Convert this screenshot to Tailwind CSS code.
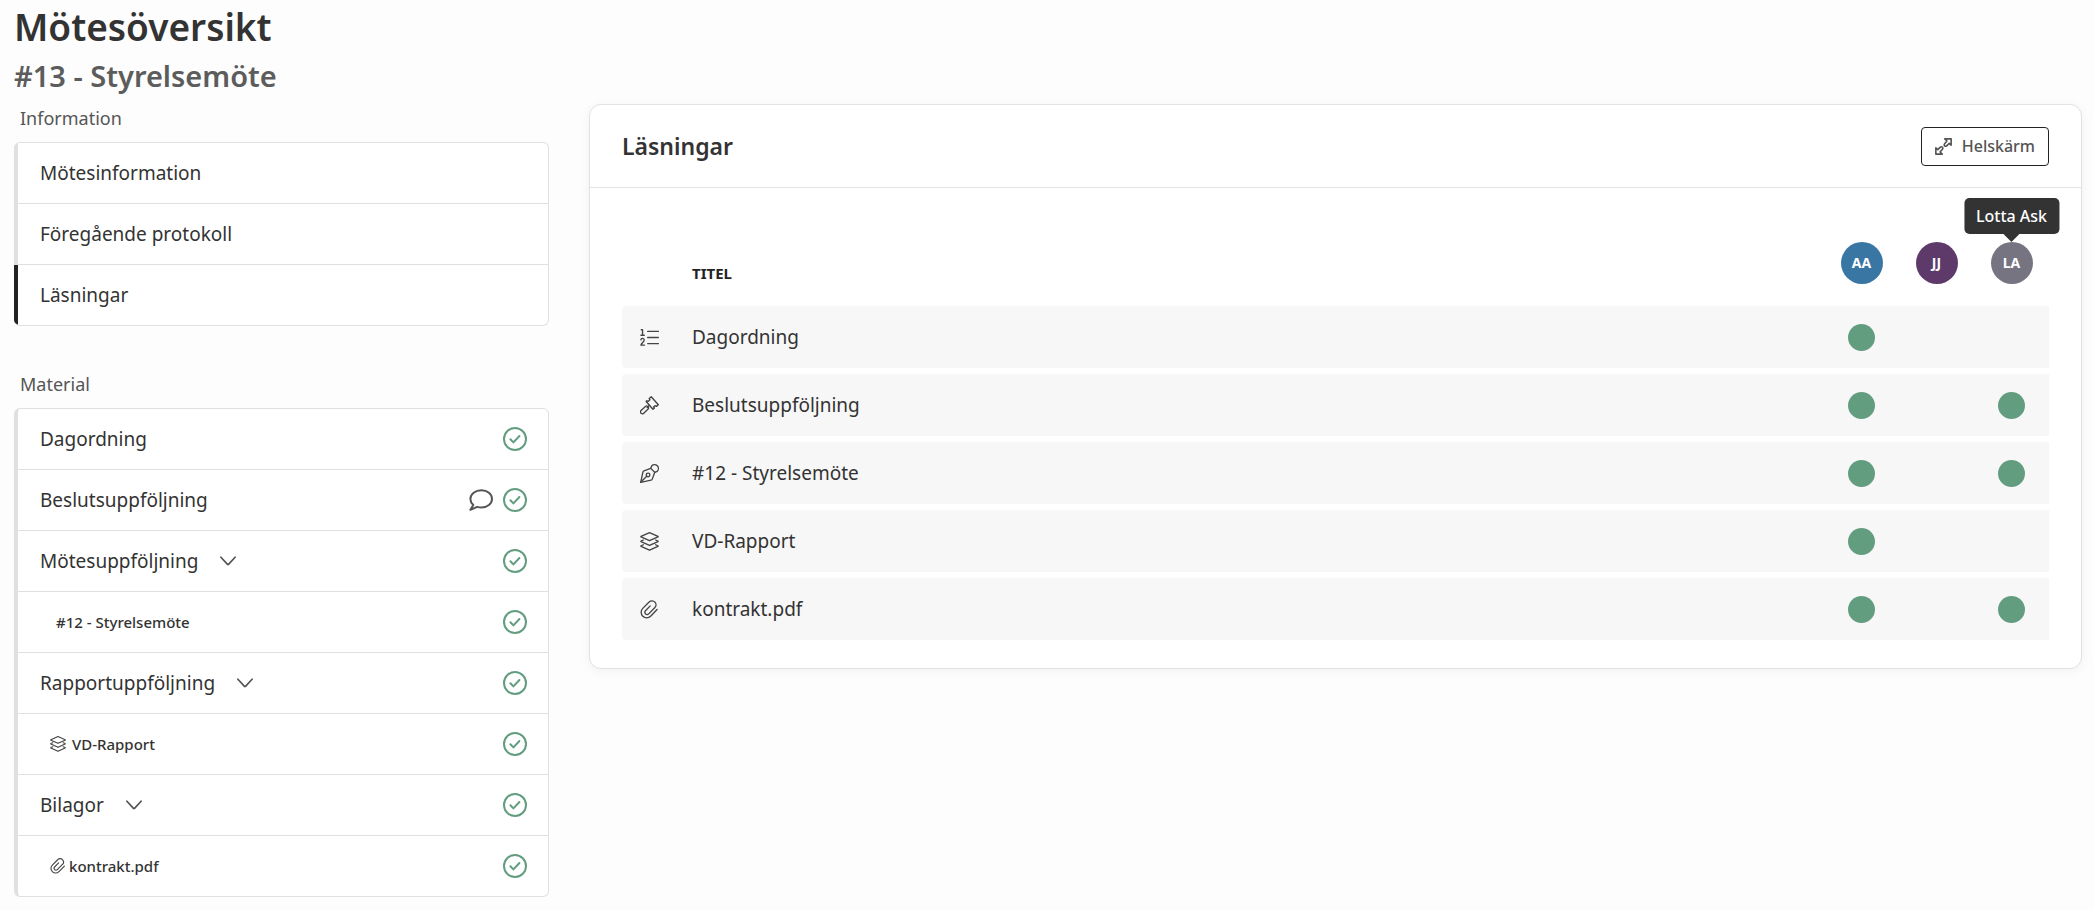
<!DOCTYPE html>
<html lang="sv">
<head>
<meta charset="utf-8">
<meta name="viewport" content="width=device-width, initial-scale=1">
<title>Mötesöversikt</title>
<script src="https://cdn.jsdelivr.net/npm/@tailwindcss/browser@4"></script>
</head>
<body class="min-h-screen bg-[#fdfdfd] font-['Noto_Sans',sans-serif] text-[19px] leading-7 font-normal text-[#333333]">

<svg class="hidden" aria-hidden="true">
  <symbol id="check" viewBox="0 0 24 24" fill="none" stroke="currentColor" stroke-width="2" stroke-linecap="round" stroke-linejoin="round">
    <circle cx="12" cy="12" r="11"/><path d="M7.400 12.200l3 3.200 6-6.400"/>
  </symbol>
  <symbol id="comment" viewBox="0 0 24 24" fill="none" stroke="currentColor" stroke-width="2" stroke-linecap="round" stroke-linejoin="round">
    <path d="M12.400 2.200C6.400 2.200 1.400 6 1.400 10.900c0 2.300 1.100 4.400 2.900 6L1.400 21.800l6.800-2.900c1.300.4 2.700.6 4.200.6 6 0 10.600-3.900 10.600-8.600s-4.600-8.700-10.600-8.700z"/>
  </symbol>
  <symbol id="chevron" viewBox="0 0 16 16" fill="none" stroke="currentColor" stroke-width="1.700" stroke-linecap="round" stroke-linejoin="round">
    <path d="M.9 4.200l6.600 7.200a.7.7 0 0 0 1 0l6.600-7.200"/>
  </symbol>
  <symbol id="layers" viewBox="0 0 24 24" fill="none" stroke="currentColor" stroke-width="1.700" stroke-linecap="round" stroke-linejoin="round">
    <path d="M12 .9L1.300 5.600a.4.4 0 0 0 0 .7L12 11l10.700-4.700a.4.4 0 0 0 0-.7z"/>
    <path d="M4.200 10.100l-2.900 1.300a.4.4 0 0 0 0 .7L12 17l10.700-4.900a.4.4 0 0 0 0-.7l-2.900-1.300"/>
    <path d="M4.200 16.100l-2.900 1.300a.4.4 0 0 0 0 .7L12 23l10.700-4.900a.4.4 0 0 0 0-.7l-2.900-1.300"/>
  </symbol>
  <symbol id="clip" viewBox="0 0 24 24" fill="none" stroke="currentColor" stroke-width="1.700" stroke-linecap="round" stroke-linejoin="round">
    <path d="M21.600 12.100l-8.200 8.400a7 7 0 0 1-9.900 0 7 7 0 0 1 0-9.900l8-8a5 5 0 0 1 7.400.100 5 5 0 0 1-.3 7l-7.600 7.800a2.800 2.800 0 0 1-4.100 0 2.800 2.800 0 0 1 0-4l6-6.100"/>
  </symbol>
  <symbol id="list" viewBox="0 0 24 24" fill="none" stroke="currentColor" stroke-width="1.700" stroke-linecap="round" stroke-linejoin="round">
    <path d="M9.700 4.300h13.500M9.700 12h13.500M9.700 19.700h13.500"/>
    <path d="M1.600 2.200h1.600v7M1.200 9.200h4.200M1.200 15a2 2 0 0 1 4 .4c0 1.800-2.600 3-4.100 6.300h4.500"/>
  </symbol>
  <symbol id="gavel" viewBox="0 0 24 24" fill="none" stroke="currentColor" stroke-width="1.700" stroke-linecap="round" stroke-linejoin="round">
    <path d="M14.200.9l-2.600 2.200 1 1.700-2.300 2-1.700-.8M8.600 6l-.8.9 8.500 9.900 1.900-1.600M14.200.9l8.900 10.200-2.300 2-1.700-.9-2 1.800 1.100 1.200"/>
    <path d="M12 11.800L9 14.500"/>
    <path d="M7.200 12.900a1.500 1.500 0 0 1 2.100.1l1.100 1.200a1.500 1.500 0 0 1-.1 2.100l-5.600 5.400a2.400 2.400 0 0 1-3.400-3.500z"/>
  </symbol>
  <symbol id="pen" viewBox="0 0 24 24" fill="none" stroke="currentColor" stroke-width="1.700" stroke-linecap="round" stroke-linejoin="round">
    <path d="M.9 23.100l2.800-13a2 2 0 0 1 1.300-1.500l8.600-3.100 5 5-3.100 8.600a2 2 0 0 1-1.500 1.300z"/>
    <path d="M13.600 5.500l1.300-3.200a4.600 4.600 0 0 1 6.900 6.900l-3.200 1.300M.9 23.100l7.600-7.600"/>
    <circle cx="10.200" cy="13.800" r="2.300"/>
  </symbol>
  <symbol id="expand" viewBox="0 0 24 24" fill="none" stroke="currentColor" stroke-width="2.300" stroke-linecap="round" stroke-linejoin="round">
    <path d="M13.800 1.200h9v9l-2.700-2.700-3.600 3.600a2 2 0 0 1-2.900 0 2 2 0 0 1 0-2.900l3.200-3.900z"/>
    <path d="M10.200 22.800h-9v-9l2.700 2.700 3.600-3.600a2 2 0 0 1 2.900 0 2 2 0 0 1 0 2.900l-3.200 3.900z"/>
  </symbol>
</svg>

<div class="pl-3.5 pr-3 pb-3">
  <header>
    <h1 class="pt-1 text-[37px] leading-[46px] font-semibold">Mötesöversikt</h1>
    <p class="text-[29px] leading-[52px] font-semibold text-[#5c5c5c]">#13 - Styrelsemöte</p>
  </header>

  <div class="grid grid-cols-[535fr_1493fr] items-start gap-x-10 pt-0.5">
    <nav aria-label="Möte">
      <h2 class="mb-[9px] pl-1.5 text-lg leading-[29px] text-[#555555]">Information</h2>
      <ul class="overflow-hidden rounded-md border-y border-r border-[#e0e0e0] bg-white divide-y divide-[#e0e0e0]">
        <li><a href="#" class="flex h-15 items-center border-l-4 border-[#e0e0e0] px-[22px]">Mötesinformation</a></li>
        <li><a href="#" class="flex h-15 items-center border-l-4 border-[#e0e0e0] px-[22px]">Föregående protokoll</a></li>
        <li><a href="#" aria-current="page" class="flex h-15 items-center border-l-4 border-[#222222] px-[22px]">Läsningar</a></li>
      </ul>

      <h2 class="mt-11 mb-[9px] pl-1.5 text-lg leading-[29px] text-[#555555]">Material</h2>
      <ul class="overflow-hidden rounded-md border-y border-r border-l-4 border-[#e0e0e0] bg-white divide-y divide-[#e0e0e0]">
        <li class="flex items-center pr-[21px] pl-[22px]">
          <a href="#" class="flex h-15 grow items-center">Dagordning</a>
          <svg class="size-6 text-[#639d80]" role="img" aria-label="Läst"><use href="#check"/></svg>
        </li>
        <li class="flex items-center gap-2.5 pr-[21px] pl-[22px]">
          <a href="#" class="flex h-15 grow items-center">Beslutsuppföljning</a>
          <svg class="size-6 text-[#555555]" role="img" aria-label="Kommentar"><use href="#comment"/></svg>
          <svg class="size-6 text-[#639d80]" role="img" aria-label="Läst"><use href="#check"/></svg>
        </li>
        <li class="flex items-center pr-[21px] pl-[22px]">
          <button type="button" aria-expanded="true" class="flex h-15 grow items-center gap-[22px] text-left">Mötesuppföljning<svg class="size-4 text-[#555555]"><use href="#chevron"/></svg></button>
          <svg class="size-6 text-[#639d80]" role="img" aria-label="Läst"><use href="#check"/></svg>
        </li>
        <li class="flex items-center pr-[21px] pl-[38px] text-[15px] font-medium">
          <a href="#" class="flex h-15 grow items-center">#12 - Styrelsemöte</a>
          <svg class="size-6 text-[#639d80]" role="img" aria-label="Läst"><use href="#check"/></svg>
        </li>
        <li class="flex items-center pr-[21px] pl-[22px]">
          <button type="button" aria-expanded="true" class="flex h-15 grow items-center gap-[22px] text-left">Rapportuppföljning<svg class="size-4 text-[#555555]"><use href="#chevron"/></svg></button>
          <svg class="size-6 text-[#639d80]" role="img" aria-label="Läst"><use href="#check"/></svg>
        </li>
        <li class="flex items-center pr-[21px] pl-8 text-[15px] font-medium">
          <a href="#" class="flex h-15 grow items-center gap-1.5"><svg class="size-4 text-[#444444]"><use href="#layers"/></svg>VD-Rapport</a>
          <svg class="size-6 text-[#639d80]" role="img" aria-label="Läst"><use href="#check"/></svg>
        </li>
        <li class="flex items-center pr-[21px] pl-[22px]">
          <button type="button" aria-expanded="true" class="flex h-15 grow items-center gap-[22px] text-left">Bilagor<svg class="size-4 text-[#555555]"><use href="#chevron"/></svg></button>
          <svg class="size-6 text-[#639d80]" role="img" aria-label="Läst"><use href="#check"/></svg>
        </li>
        <li class="flex items-center pr-[21px] pl-8 text-[15px] font-medium">
          <a href="#" class="flex h-15 grow items-center gap-[3px]"><svg class="size-4 text-[#444444]"><use href="#clip"/></svg>kontrakt.pdf</a>
          <svg class="size-6 text-[#639d80]" role="img" aria-label="Läst"><use href="#check"/></svg>
        </li>
      </ul>
    </nav>

    <main class="rounded-xl border border-[#e2e2e2] bg-white shadow-[0_2px_12px_rgba(0,0,0,0.05)]">
      <div class="flex h-[83px] items-center justify-between border-b border-[#e2e2e2] px-8">
        <h2 class="text-[23px] font-semibold">Läsningar</h2>
        <button type="button" class="flex h-[39px] items-center gap-2.5 rounded border border-[#222222] px-[13px] text-base font-medium text-[#555555]"><svg class="size-[17px]"><use href="#expand"/></svg>Helskärm</button>
      </div>

      <div class="px-8 pt-8 pb-[22px]">
        <table class="w-full table-fixed border-separate border-spacing-x-0 border-spacing-y-1.5">
          <colgroup><col class="w-[70px]"><col><col class="w-[75px]"><col class="w-[75px]"><col class="w-[75px]"></colgroup>
          <thead>
            <tr>
              <td></td>
              <th scope="col" class="py-4 text-left align-bottom text-[15px] leading-[22px] font-bold text-[#222222]">TITEL</th>
              <th scope="col" class="py-4"><span class="mx-auto flex size-[42px] items-center justify-center rounded-full bg-[#3a76a3] text-sm font-bold text-white">AA</span></th>
              <th scope="col" class="py-4"><span class="mx-auto flex size-[42px] items-center justify-center rounded-full bg-[#5d3a69] text-sm font-bold text-white">JJ</span></th>
              <th scope="col" class="py-4">
                <span class="relative mx-auto flex size-[42px] items-center justify-center rounded-full bg-[#777482] text-sm font-bold text-white">LA
                  <span role="tooltip" class="absolute bottom-full left-1/2 flex -translate-x-1/2 flex-col items-center">
                    <span class="flex h-9 items-center rounded-[5px] bg-[#333333] px-3 text-base font-medium whitespace-nowrap">Lotta Ask</span>
                    <svg class="h-2 w-4 text-[#333333]" viewBox="0 0 16 8"><path fill="currentColor" d="M0 0h16L8 8z"/></svg>
                  </span>
                </span>
              </th>
            </tr>
          </thead>
          <tbody>
            <tr class="h-[62px] bg-[#f7f7f7]">
              <td class="rounded-l-sm pl-[18px]"><svg class="size-[19px] text-[#444444]"><use href="#list"/></svg></td>
              <td>Dagordning</td>
              <td><span class="mx-auto block size-[27px] rounded-full bg-[#639d80]" role="img" aria-label="Läst"></span></td>
              <td></td>
              <td></td>
            </tr>
            <tr class="h-[62px] bg-[#f7f7f7]">
              <td class="rounded-l-sm pl-[18px]"><svg class="size-[19px] text-[#444444]"><use href="#gavel"/></svg></td>
              <td>Beslutsuppföljning</td>
              <td><span class="mx-auto block size-[27px] rounded-full bg-[#639d80]" role="img" aria-label="Läst"></span></td>
              <td></td>
              <td><span class="mx-auto block size-[27px] rounded-full bg-[#639d80]" role="img" aria-label="Läst"></span></td>
            </tr>
            <tr class="h-[62px] bg-[#f7f7f7]">
              <td class="rounded-l-sm pl-[18px]"><svg class="size-[19px] text-[#444444]"><use href="#pen"/></svg></td>
              <td>#12 - Styrelsemöte</td>
              <td><span class="mx-auto block size-[27px] rounded-full bg-[#639d80]" role="img" aria-label="Läst"></span></td>
              <td></td>
              <td><span class="mx-auto block size-[27px] rounded-full bg-[#639d80]" role="img" aria-label="Läst"></span></td>
            </tr>
            <tr class="h-[62px] bg-[#f7f7f7]">
              <td class="rounded-l-sm pl-[18px]"><svg class="size-[19px] text-[#444444]"><use href="#layers"/></svg></td>
              <td>VD-Rapport</td>
              <td><span class="mx-auto block size-[27px] rounded-full bg-[#639d80]" role="img" aria-label="Läst"></span></td>
              <td></td>
              <td></td>
            </tr>
            <tr class="h-[62px] bg-[#f7f7f7]">
              <td class="rounded-l-sm pl-[18px]"><svg class="size-[19px] text-[#444444]"><use href="#clip"/></svg></td>
              <td>kontrakt.pdf</td>
              <td><span class="mx-auto block size-[27px] rounded-full bg-[#639d80]" role="img" aria-label="Läst"></span></td>
              <td></td>
              <td><span class="mx-auto block size-[27px] rounded-full bg-[#639d80]" role="img" aria-label="Läst"></span></td>
            </tr>
          </tbody>
        </table>
      </div>
    </main>
  </div>
</div>
</body>
</html>
